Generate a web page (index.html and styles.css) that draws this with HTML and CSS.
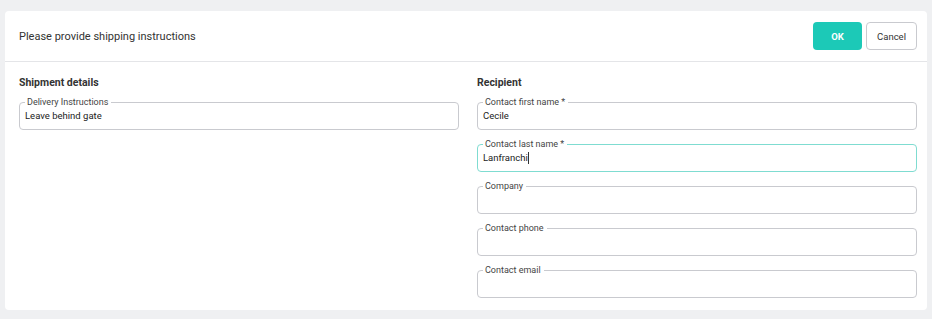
FILE: index.html
```html
<!DOCTYPE html>
<html lang="en">
<head>
  <meta charset="UTF-8" />
  <title>Shipping instructions</title>
  <link rel="stylesheet" href="styles.css">
</head>
<body>
  <div class="dialog">
    <div class="dialog-header">
      <span class="title">Please provide shipping instructions</span>
      <div class="actions">
        <button class="btn btn-ok">OK</button>
        <button class="btn btn-cancel">Cancel</button>
      </div>
    </div>

    <div class="dialog-body">
      <div class="column">
        <h3>Shipment details</h3>
        <fieldset class="field">
          <legend>Delivery Instructions</legend>
          <div class="value">Leave behind gate</div>
        </fieldset>
      </div>

      <div class="column">
        <h3>Recipient</h3>
        <fieldset class="field">
          <legend>Contact first name *</legend>
          <div class="value">Cecile</div>
        </fieldset>
        <fieldset class="field focused">
          <legend>Contact last name *</legend>
          <div class="value">Lanfranchi<span class="caret"></span></div>
        </fieldset>
        <fieldset class="field">
          <legend>Company</legend>
          <div class="value"></div>
        </fieldset>
        <fieldset class="field">
          <legend>Contact phone</legend>
          <div class="value"></div>
        </fieldset>
        <fieldset class="field">
          <legend>Contact email</legend>
          <div class="value"></div>
        </fieldset>
      </div>
    </div>
  </div>
</body>
</html>
```

FILE: styles.css
```css
body {
  margin: 0;
  padding: 11px 5px;
  background: #eff0f2;
  font-family: Roboto, sans-serif;
  color: #333;
}
.dialog {
  background: white;
  border-radius: 4px;
  height: 299px;
  width: 922px;
}
.dialog-header {
  display: flex;
  align-items: center;
  justify-content: space-between;
  height: 50px;
  padding: 0 10px 0 14px;
  border-bottom: 1px solid #e4e5e8;
}
.title {
  font-size: 11px;
  color: #333;
}
.actions {
  display: flex;
  gap: 4px;
}
.btn {
  height: 28px;
  border-radius: 4px;
  font-family: inherit;
  font-size: 9.5px;
  cursor: pointer;
}
.btn-ok {
  width: 49px;
  background: #1cc9b7;
  border: none;
  color: white;
  font-weight: bold;
}
.btn-cancel {
  width: 51px;
  background: white;
  border: 1px solid #c9cacf;
  color: #333;
}
.dialog-body {
  display: grid;
  grid-template-columns: 1fr 1fr;
  gap: 18px;
  padding: 0 10px 0 14px;
}
h3 {
  margin: 14px 0 8px;
  font-size: 10.5px;
  line-height: 13px;
  color: #333;
}
.field {
  margin: 0 0 9px;
  padding: 0 5px 7px;
  border: 1px solid #c9cacf;
  border-radius: 4px;
  min-width: 0;
}
.field legend {
  margin-left: 0;
  padding: 0 3px 0 2px;
  font-size: 9px;
  line-height: 10px;
  color: #444;
}
.field.focused { border-color: #7fdcd1; }
.value {
  height: 13px;
  margin-top: 2px;
  font-size: 9.5px;
  line-height: 13px;
  color: #222;
}
.caret {
  display: inline-block;
  width: 1px;
  height: 12px;
  background: #333;
  vertical-align: middle;
}
```
